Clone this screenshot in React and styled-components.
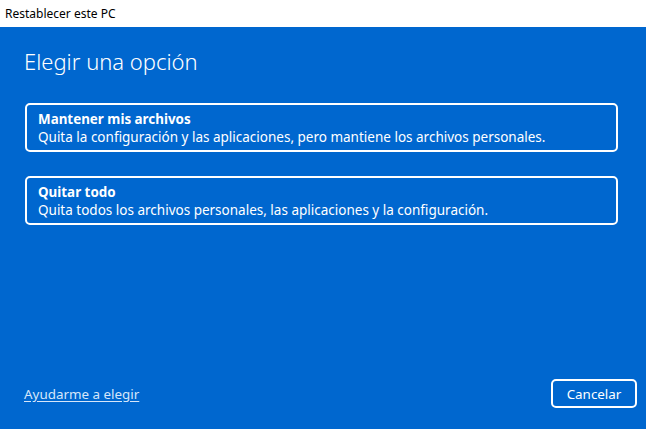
import React from "react";
import styled, { createGlobalStyle } from "styled-components";

const Global = createGlobalStyle`
  html, body { margin: 0; padding: 0; height: 100%; }
  body { font-family: "Segoe UI", "Noto Sans", "Open Sans", sans-serif; }
  #root { height: 100%; }
`;

const Window = styled.div`
  display: flex;
  flex-direction: column;
  height: 429px;
  width: 646px;
  overflow: hidden;
`;

const TitleBar = styled.div`
  height: 27px;
  flex: none;
  background: #ffffff;
  display: flex;
  align-items: center;
  padding-left: 5px;
  font-size: 12px;
  color: #000;
`;

const Body = styled.div`
  flex: 1;
  background: #0067cf;
  color: #fff;
  display: flex;
  flex-direction: column;
  padding: 19px 9px 21px 24px;
`;

const Heading = styled.h1`
  margin: 0 0 27px 0;
  font-size: 22px;
  font-weight: 300;
  line-height: 30px;
`;

const OptionList = styled.div`
  display: flex;
  flex-direction: column;
  gap: 24px;
  margin-right: 19px;
  margin-left: 1px;
`;

const Option = styled.button`
  all: unset;
  box-sizing: border-box;
  border: 2px solid #ffffff;
  border-radius: 5px;
  height: 49px;
  padding: 5px 11px 0 11px;
  display: flex;
  flex-direction: column;
  color: #fff;
  font-family: inherit;
`;

const OptionTitle = styled.div`
  font-size: 13.4px;
  font-weight: 700;
  line-height: 18px;
`;

const OptionDesc = styled.div`
  font-size: 13.5px;
  line-height: 19px;
`;

const Footer = styled.div`
  margin-top: auto;
  display: flex;
  align-items: center;
  justify-content: space-between;
`;

const HelpLink = styled.a`
  font-size: 13.4px;
  color: #d6e6fa;
  text-decoration: underline;
  text-underline-offset: 2px;
`;

const CancelButton = styled.button`
  all: unset;
  box-sizing: border-box;
  width: 86px;
  height: 29px;
  border: 2px solid #ffffff;
  border-radius: 5px;
  display: flex;
  align-items: center;
  justify-content: center;
  font-size: 13.4px;
  color: #fff;
  font-family: inherit;
`;

export default function App() {
  return (
    <>
      <Global />
      <Window>
        <TitleBar>Restablecer este PC</TitleBar>
        <Body>
          <Heading>Elegir una opción</Heading>
          <OptionList>
            <Option>
              <OptionTitle>Mantener mis archivos</OptionTitle>
              <OptionDesc>
                Quita la configuración y las aplicaciones, pero mantiene los archivos personales.
              </OptionDesc>
            </Option>
            <Option>
              <OptionTitle>Quitar todo</OptionTitle>
              <OptionDesc>
                Quita todos los archivos personales, las aplicaciones y la configuración.
              </OptionDesc>
            </Option>
          </OptionList>
          <Footer>
            <HelpLink href="#">Ayudarme a elegir</HelpLink>
            <CancelButton>Cancelar</CancelButton>
          </Footer>
        </Body>
      </Window>
    </>
  );
}
